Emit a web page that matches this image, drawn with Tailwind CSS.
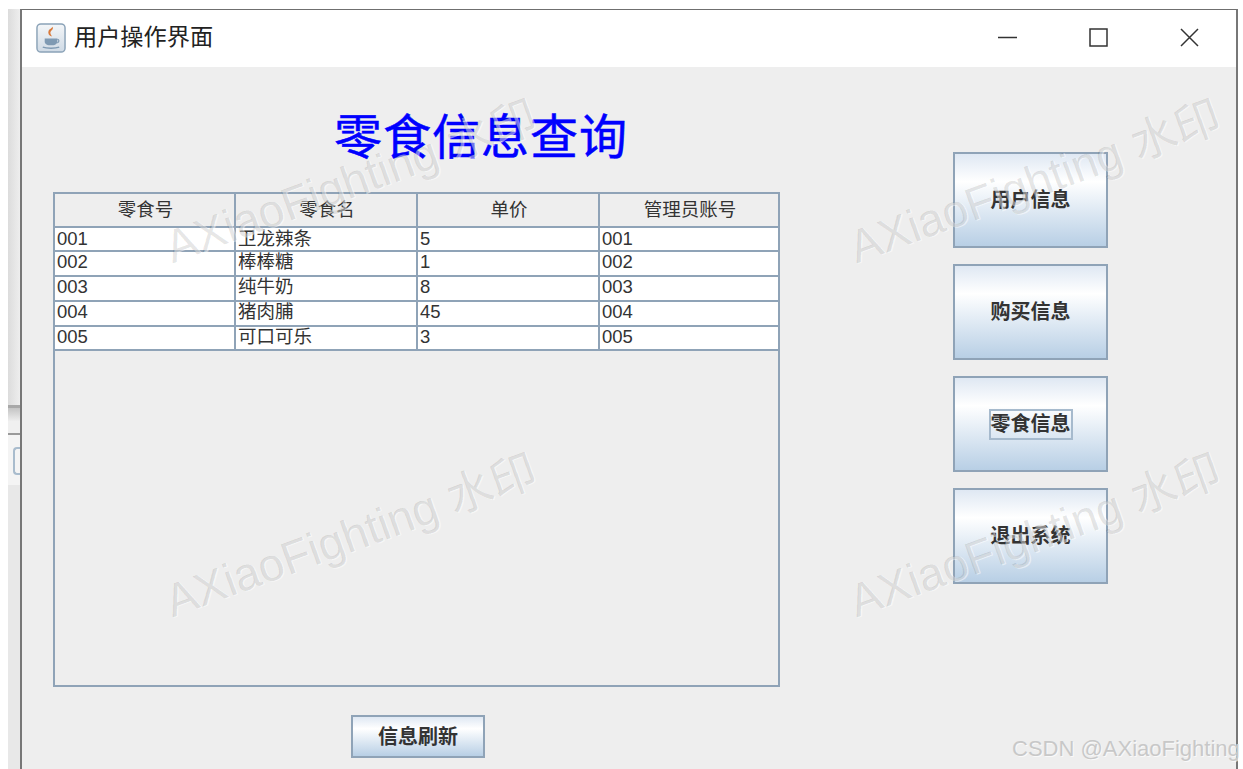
<!DOCTYPE html>
<html lang="zh-CN">

<head>
  <meta charset="UTF-8">
  <title>用户操作界面</title>
  <script src="https://cdn.jsdelivr.net/npm/@tailwindcss/browser@4"></script>
</head>

<body class="bg-white">
  <div class="relative w-[1243px] h-[769px] overflow-hidden flex pl-[8px] pr-[5px] pt-[9px] bg-white font-['Liberation_Sans','Noto_Sans_CJK_SC',sans-serif] text-[#333]">

    <!-- window behind -->
    <div class="w-[12px] h-full flex flex-col shrink-0">
      <div class="h-[396px] bg-gradient-to-r from-[#dcdcdc] to-[#eeeeee]"></div>
      <div class="h-[3px] bg-[#a8a8a8]"></div>
      <div class="h-[13px] bg-gradient-to-b from-[#c4c4c4] to-[#eeeeee]"></div>
      <div class="h-[14px] bg-[#f0f0f0] border-b-2 border-[#9a9a9a]"></div>
      <div class="h-[50px] bg-[#f4f4f4] pl-[5px] pt-[12px]">
        <div class="w-[7px] h-[28px] border-2 border-r-0 border-[#a9bccd] rounded-l-[4px]"></div>
      </div>
      <div class="flex-1 bg-[#e8e8e8]"></div>
    </div>

    <!-- window -->
    <div class="flex-1 h-full flex flex-col border-t border-[#6f6f6f] border-x-2 border-x-[#777]">
      <div class="h-[57px] shrink-0 bg-white flex items-center pl-[14px] pr-[37px] pb-[2px]">
        <svg class="w-[30px] h-[30px]" viewBox="0 0 31 31">
          <defs>
            <linearGradient id="jg" x1="0" y1="0" x2="0" y2="1">
              <stop offset="0" stop-color="#f4f6f8" />
              <stop offset="1" stop-color="#cfdae5" />
            </linearGradient>
          </defs>
          <rect x="1" y="1" width="29" height="29" rx="4" fill="url(#jg)" stroke="#8ba3b8" stroke-width="1.500" />
          <path d="M17 4c2 3-3 4-2 7 .4 1 1 1.500 1.500 3-3-1-4.500-3-3.500-6 .8-1.600 3.500-2.500 4-4z" fill="#d9793a" />
          <path d="M9 16h13v3c0 3-3 4-6.500 4S9 22 9 19z" fill="#7f9ab3" />
          <path d="M22 17c2 0 2.500 2.500 0 3.500" fill="none" stroke="#7f9ab3" stroke-width="1.200" />
          <path d="M7 25c4 1.500 13 1.500 17 0" fill="none" stroke="#7f9ab3" stroke-width="1.500" />
        </svg>
        <span class="ml-[8px] text-[23.200px] leading-none text-[#222]">用户操作界面</span>
        <div class="ml-auto flex items-center gap-[72px]">
          <svg class="w-[19px] h-[19px]" viewBox="0 0 19 19"><path d="M0 9.500h19" stroke="#333" stroke-width="1.500" /></svg>
          <svg class="w-[19px] h-[19px]" viewBox="0 0 19 19"><rect x="1" y="1" width="17" height="17" fill="none" stroke="#333" stroke-width="1.500" /></svg>
          <svg class="w-[19px] h-[19px]" viewBox="0 0 19 19"><path d="M1 1l17 17M18 1L1 18" stroke="#333" stroke-width="1.500" /></svg>
        </div>
      </div>

      <div class="flex-1 bg-[#eeeeee] flex pl-[31px]">
        <div class="w-[727px] shrink-0 flex flex-col">
          <h1 class="h-[125px] pt-[34px] pl-[281px] font-normal [-webkit-text-stroke:0.5px_#0000ff] text-[48px] leading-[64px] tracking-[1px] text-[#0000ff] font-['Noto_Sans_CJK_SC',sans-serif] whitespace-nowrap">零食信息查询</h1>

          <div class="h-[495px] border-2 border-[#8fa3b7]">
            <table class="w-[725px] table-fixed border-collapse text-[18.500px] leading-none">
              <thead>
                <tr class="h-[33px] text-center">
                  <th class="w-[180px] pl-[2px] font-normal border-r-2 border-b-2 border-[#8fa3b7]">零食号</th>
                  <th class="w-[182px] pl-[2px] font-normal border-r-2 border-b-2 border-[#8fa3b7]">零食名</th>
                  <th class="w-[182px] pl-[2px] font-normal border-r-2 border-b-2 border-[#8fa3b7]">单价</th>
                  <th class="pl-[2px] font-normal border-r-2 border-b-2 border-[#8fa3b7]">管理员账号</th>
                </tr>
              </thead>
              <tbody class="bg-white">
                <tr class="h-[24px]">
                  <td class="pl-[2px] border-r-2 border-b-2 border-[#8fa3b7]">001</td>
                  <td class="pl-[2px] border-r-2 border-b-2 border-[#8fa3b7]">卫龙辣条</td>
                  <td class="pl-[2px] border-r-2 border-b-2 border-[#8fa3b7]">5</td>
                  <td class="pl-[2px] border-r-2 border-b-2 border-[#8fa3b7]">001</td>
                </tr>
                <tr class="h-[25px] [&>td]:pb-[2px]">
                  <td class="pl-[2px] border-r-2 border-b-2 border-[#8fa3b7]">002</td>
                  <td class="pl-[2px] border-r-2 border-b-2 border-[#8fa3b7]">棒棒糖</td>
                  <td class="pl-[2px] border-r-2 border-b-2 border-[#8fa3b7]">1</td>
                  <td class="pl-[2px] border-r-2 border-b-2 border-[#8fa3b7]">002</td>
                </tr>
                <tr class="h-[25px] [&>td]:pb-[2px]">
                  <td class="pl-[2px] border-r-2 border-b-2 border-[#8fa3b7]">003</td>
                  <td class="pl-[2px] border-r-2 border-b-2 border-[#8fa3b7]">纯牛奶</td>
                  <td class="pl-[2px] border-r-2 border-b-2 border-[#8fa3b7]">8</td>
                  <td class="pl-[2px] border-r-2 border-b-2 border-[#8fa3b7]">003</td>
                </tr>
                <tr class="h-[25px] [&>td]:pb-[2px]">
                  <td class="pl-[2px] border-r-2 border-b-2 border-[#8fa3b7]">004</td>
                  <td class="pl-[2px] border-r-2 border-b-2 border-[#8fa3b7]">猪肉脯</td>
                  <td class="pl-[2px] border-r-2 border-b-2 border-[#8fa3b7]">45</td>
                  <td class="pl-[2px] border-r-2 border-b-2 border-[#8fa3b7]">004</td>
                </tr>
                <tr class="h-[24px] [&>td]:pb-[2px]">
                  <td class="pl-[2px] border-r-2 border-b-2 border-[#8fa3b7]">005</td>
                  <td class="pl-[2px] border-r-2 border-b-2 border-[#8fa3b7]">可口可乐</td>
                  <td class="pl-[2px] border-r-2 border-b-2 border-[#8fa3b7]">3</td>
                  <td class="pl-[2px] border-r-2 border-b-2 border-[#8fa3b7]">005</td>
                </tr>
              </tbody>
            </table>
          </div>

          <button class="mt-[28px] ml-[298px] w-[134px] h-[43px] border-2 border-[#8fa3b7] bg-gradient-to-b from-[#dfe8f3] via-white via-[30%] to-[#b8cfe5] font-bold text-[20px] leading-none text-[#333]">信息刷新</button>
        </div>

        <div class="ml-[173px] pt-[85px] w-[155px] flex flex-col gap-[16px]">
          <button class="h-[96px] border-2 border-[#8fa3b7] bg-gradient-to-b from-[#dfe8f3] via-white via-[30%] to-[#b8cfe5] font-bold text-[20px] leading-none text-[#333]">用户信息</button>
          <button class="h-[96px] border-2 border-[#8fa3b7] bg-gradient-to-b from-[#dfe8f3] via-white via-[30%] to-[#b8cfe5] font-bold text-[20px] leading-none text-[#333]">购买信息</button>
          <button class="h-[96px] border-2 border-[#8fa3b7] bg-gradient-to-b from-[#dfe8f3] via-white via-[30%] to-[#b8cfe5] font-bold text-[20px] leading-none text-[#333] flex items-center justify-center">
            <span class="w-[84px] h-[31px] flex items-center justify-center border-2 border-[#a6bacd]">零食信息</span>
          </button>
          <button class="h-[96px] border-2 border-[#8fa3b7] bg-gradient-to-b from-[#dfe8f3] via-white via-[30%] to-[#b8cfe5] font-bold text-[20px] leading-none text-[#333]">退出系统</button>
        </div>
      </div>
    </div>

    <!-- watermarks over the image -->
    <span class="absolute left-[155px] top-[157px] w-[400px] -rotate-[20deg] whitespace-nowrap text-[46px] leading-none text-black/10 [text-shadow:1px_1px_0_rgba(255,255,255,0.5)]">AXiaoFighting 水印</span>
    <span class="absolute left-[155px] top-[511px] w-[400px] -rotate-[20deg] whitespace-nowrap text-[46px] leading-none text-black/10 [text-shadow:1px_1px_0_rgba(255,255,255,0.5)]">AXiaoFighting 水印</span>
    <span class="absolute left-[839px] top-[157px] w-[400px] -rotate-[20deg] whitespace-nowrap text-[46px] leading-none text-black/10 [text-shadow:1px_1px_0_rgba(255,255,255,0.5)]">AXiaoFighting 水印</span>
    <span class="absolute left-[839px] top-[511px] w-[400px] -rotate-[20deg] whitespace-nowrap text-[46px] leading-none text-black/10 [text-shadow:1px_1px_0_rgba(255,255,255,0.5)]">AXiaoFighting 水印</span>
    <span class="absolute left-[1012px] top-[737px] whitespace-nowrap text-[22px] leading-[24px] text-[#c8c8c8] [text-shadow:1px_1px_0_rgba(255,255,255,0.7)]">CSDN @AXiaoFighting</span>
  </div>
</body>

</html>
